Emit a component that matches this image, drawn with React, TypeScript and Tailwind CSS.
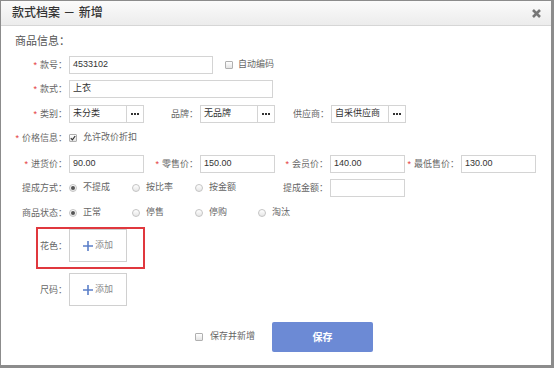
import React from "react";

const Star = () => <span className="text-[#e4393c] mr-[3px]">*</span>;

function Label({ text, req, w }: { text: string; req?: boolean; w: string }) {
  return (
    <div className={`${w} shrink-0 text-right mr-[2px] text-[9px] leading-[18px] text-[#666] whitespace-nowrap`}>
      {req && <Star />}
      {text}：
    </div>
  );
}

function Box({ value, w }: { value?: string; w: string }) {
  return (
    <div className={`${w} h-[18px] shrink-0 border border-[#d4d4d4] bg-white flex items-center px-[3px] text-[9px] text-[#333]`}>
      {value}
    </div>
  );
}

function Picker({ value }: { value: string }) {
  return (
    <div className="flex shrink-0">
      <Box value={value} w="w-[58px]" />
      <div className="w-[17px] h-[18px] border border-l-0 border-[#d4d4d4] bg-white flex items-center justify-center gap-[1px]">
        <span className="w-[2px] h-[2px] bg-[#333]" />
        <span className="w-[2px] h-[2px] bg-[#333]" />
        <span className="w-[2px] h-[2px] bg-[#333]" />
      </div>
    </div>
  );
}

function Check({ checked }: { checked?: boolean }) {
  return (
    <span className="w-[8px] h-[8px] shrink-0 border border-[#b0b0b0] rounded-[1px] bg-linear-to-b from-white to-[#e4e4e4] flex items-center justify-center">
      {checked && (
        <svg width="6" height="6" viewBox="0 0 6 6">
          <path d="M0.8 3.2 L2.4 4.8 L5.2 1" fill="none" stroke="#333" strokeWidth="1.2" />
        </svg>
      )}
    </span>
  );
}

function Radio({ label, checked }: { label: string; checked?: boolean }) {
  return (
    <div className="w-[63px] shrink-0 flex items-center gap-[6px]">
      <span className="w-[8px] h-[8px] shrink-0 rounded-full border border-[#c4c4c4] bg-linear-to-b from-white to-[#e6e6e6] flex items-center justify-center">
        {checked && <span className="w-[4px] h-[4px] rounded-full bg-[#555]" />}
      </span>
      <span className="text-[9px] text-[#666]">{label}</span>
    </div>
  );
}

function AddBox() {
  return (
    <div className="w-[58px] h-[33px] border border-[#d0d0d0] bg-white flex items-center justify-center gap-[2px]">
      <svg width="10" height="10" viewBox="0 0 10 10">
        <path d="M5 0 V10 M0 5 H10" stroke="#5b7fc9" strokeWidth="1.6" />
      </svg>
      <span className="text-[9px] text-[#888]">添加</span>
    </div>
  );
}

export default function App() {
  return (
    <div className="w-[554px] h-[368px] bg-[#8c8c8c] pt-px pl-px pr-[3px] pb-[3px] font-['Liberation_Sans','Noto_Sans_CJK_SC',sans-serif]">
      <div className="w-[550px] h-[364px] bg-white flex flex-col">
        {/* title bar */}
        <div className="h-[25px] shrink-0 border-b border-[#d6d6d6] bg-linear-to-b from-[#fbfbfb] to-[#ececec] flex items-center justify-between pl-[11px] pr-[10px]">
          <span className="text-[12px] text-[#333] font-medium">款式档案 － 新增</span>
          <svg width="9" height="9" viewBox="0 0 9 9">
            <path d="M1 1 L8 8 M8 1 L1 8" stroke="#777" strokeWidth="2.6" />
          </svg>
        </div>

        <div className="flex flex-col">
          <div className="mt-[7px] h-[16px] leading-[16px] pl-[14px] text-[11px] text-[#555]">商品信息：</div>

          <div className="mt-[7px] flex items-center">
            <Label text="款号" req w="w-[66px]" />
            <Box value="4533102" w="w-[144px]" />
            <div className="ml-[12px] flex items-center gap-[5px]">
              <Check />
              <span className="text-[9px] text-[#666]">自动编码</span>
            </div>
          </div>

          <div className="mt-[6px] flex items-center">
            <Label text="款式" req w="w-[66px]" />
            <Box value="上衣" w="w-[204px]" />
          </div>

          <div className="mt-[7px] flex items-center">
            <Label text="类别" req w="w-[66px]" />
            <Picker value="未分类" />
            <Label text="品牌" w="w-[54px]" />
            <Picker value="无品牌" />
            <Label text="供应商" w="w-[54px]" />
            <Picker value="自采供应商" />
          </div>

          <div className="mt-[6px] h-[18px] flex items-center">
            <Label text="价格信息" req w="w-[66px]" />
            <Check checked />
            <span className="ml-[6px] text-[9px] text-[#666]">允许改价折扣</span>
          </div>

          <div className="mt-[8px] flex items-center">
            <Label text="进货价" req w="w-[66px]" />
            <Box value="90.00" w="w-[75px]" />
            <Label text="零售价" req w="w-[54px]" />
            <Box value="150.00" w="w-[75px]" />
            <Label text="会员价" req w="w-[53px]" />
            <Box value="140.00" w="w-[75px]" />
            <Label text="最低售价" req w="w-[54px]" />
            <Box value="130.00" w="w-[75px]" />
          </div>

          <div className="mt-[6px] flex items-center">
            <Label text="提成方式" w="w-[66px]" />
            <div className="w-[205px] shrink-0 flex items-center">
              <Radio label="不提成" checked />
              <Radio label="按比率" />
              <Radio label="按金额" />
            </div>
            <Label text="提成金额" w="w-[54px]" />
            <Box w="w-[75px]" />
          </div>

          <div className="mt-[7px] h-[18px] flex items-center">
            <Label text="商品状态" w="w-[66px]" />
            <Radio label="正常" checked />
            <Radio label="停售" />
            <Radio label="停购" />
            <Radio label="淘汰" />
          </div>

          <div className="mt-[7px] relative flex items-center">
            <Label text="花色" w="w-[66px]" />
            <AddBox />
            <div className="absolute left-[35px] top-[-2px] w-[109px] h-[42px] border-2 border-[#e0383e] pointer-events-none" />
          </div>

          <div className="mt-[11px] flex items-center">
            <Label text="尺码" w="w-[66px]" />
            <AddBox />
          </div>

          <div className="mt-[16px] flex items-center pl-[194px]">
            <div className="w-[77px] flex items-center">
              <Check />
              <span className="ml-[7px] text-[9px] text-[#666] whitespace-nowrap">保存并新增</span>
            </div>
            <button className="w-[101px] h-[30px] rounded-[2px] bg-[#6c8ad5] text-white text-[10px] font-bold">
              保存
            </button>
          </div>
        </div>
      </div>
    </div>
  );
}
